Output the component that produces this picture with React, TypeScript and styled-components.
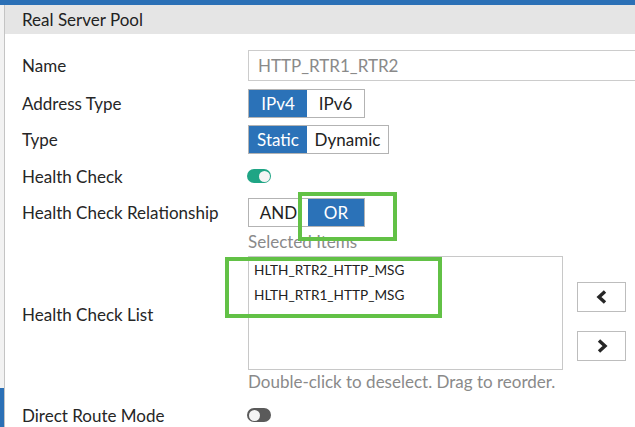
import * as React from 'react';
import styled, { createGlobalStyle } from 'styled-components';

const GlobalStyle = createGlobalStyle`
	html, body {
		margin: 0;
		padding: 0;
		width: 635px;
		height: 427px;
		overflow: hidden;
		background: #ffffff;
		font-family: Lato, "Open Sans", sans-serif;
	}
`;

const Page = styled.div`
	position: relative;
	width: 635px;
	height: 427px;
	display: flex;
	flex-direction: column;
	overflow: hidden;
`;

const TopBar = styled.div`
	height: 5px;
	background-color: #2b70b6;
	flex: none;
`;

const Body = styled.div`
	flex: 1;
	display: flex;
	min-height: 0;
`;

const SideStrip = styled.div`
	width: 4px;
	flex: none;
	background-color: #f2f2f2;
	display: flex;
	flex-direction: column;
	justify-content: flex-end;
`;

const SideAccent = styled.div`
	height: 39px;
	background-color: #2b70b6;
`;

const Panel = styled.div`
	flex: 1;
	border-left: 1px solid #c4c4c4;
	display: flex;
	flex-direction: column;
	min-width: 0;
`;

const Header = styled.div`
	flex: none;
	height: 29px;
	background-color: #e5e5e5;
	padding-left: 17px;
	display: flex;
	align-items: center;
	font-size: 17px;
	color: #222;
`;

const Form = styled.div`
	flex: none;
	padding: 16px 0 0 17px;
	display: grid;
	grid-template-columns: 226px 1fr;
`;

const Label = styled.div<{ $h: number; $mt?: number }>`
	height: ${p => p.$h}px;
	margin-top: ${p => p.$mt || 0}px;
	display: flex;
	align-items: center;
	font-size: 17px;
	color: #262626;
	white-space: nowrap;
`;

const Cell = styled.div<{ $h: number; $mt?: number }>`
	height: ${p => p.$h}px;
	margin-top: ${p => p.$mt || 0}px;
	display: flex;
	align-items: center;
`;

const TextInput = styled.div`
	box-sizing: border-box;
	width: 400px;
	height: 31px;
	border: 1px solid #cccccc;
	padding-left: 9px;
	display: flex;
	align-items: center;
	font-size: 17px;
	color: #8a8a8a;
`;

const Segmented = styled.div`
	display: flex;
	height: 29px;
	box-sizing: border-box;
	border: 1px solid #b3b3b3;
`;

const Segment = styled.div<{ $active?: boolean; $w: number }>`
	width: ${p => p.$w}px;
	box-sizing: border-box;
	display: flex;
	align-items: center;
	justify-content: center;
	font-size: 17px;
	background-color: ${p => (p.$active ? '#2b72b8' : '#ffffff')};
	color: ${p => (p.$active ? '#ffffff' : '#222')};
`;

const Toggle = styled.div<{ $on?: boolean }>`
	position: relative;
	width: 24px;
	height: 14px;
	border-radius: 8px;
	margin-left: -1px;
	background-color: ${p => (p.$on ? '#1fa585' : '#5a5a5a')};

	&::after {
		content: '';
		position: absolute;
		top: 1.5px;
		left: ${p => (p.$on ? '11.5px' : '1.5px')};
		width: 11px;
		height: 11px;
		border-radius: 50%;
		background-color: #f4f4f4;
	}
`;

const ListLabel = styled.div`
	display: flex;
	align-items: center;
	padding-top: 10px;
	font-size: 17px;
	color: #262626;
`;

const ListSection = styled.div`
	margin-top: 5px;
	display: flex;
	flex-direction: column;
`;

const HintText = styled.div<{ $mt: number }>`
	height: 20px;
	line-height: 20px;
	margin-top: ${p => p.$mt}px;
	font-size: 17px;
	color: #8a8a8a;
	white-space: nowrap;
`;

const ListRow = styled.div`
	display: flex;
	margin-top: 4px;
`;

const ListBox = styled.div`
	box-sizing: border-box;
	width: 315px;
	height: 114px;
	border: 1px solid #c8c8c8;
	padding: 3px 0 0 5px;
	display: flex;
	flex-direction: column;
`;

const ListItem = styled.div`
	height: 25px;
	line-height: 20px;
	font-size: 13.6px;
	color: #222;
`;

const ArrowColumn = styled.div`
	margin-left: 14px;
	padding-top: 26px;
	display: flex;
	flex-direction: column;
	gap: 19px;
`;

const ArrowButton = styled.div`
	box-sizing: border-box;
	width: 49px;
	height: 30px;
	border: 1px solid #bdbdbd;
	display: flex;
	align-items: center;
	justify-content: center;
`;

const Highlight = styled.div<{ $x: number; $y: number; $w: number; $h: number }>`
	position: absolute;
	left: ${p => p.$x}px;
	top: ${p => p.$y}px;
	width: ${p => p.$w}px;
	height: ${p => p.$h}px;
	box-sizing: border-box;
	border: 4px solid #62c146;
	pointer-events: none;
`;

const Chevron = ({ dir }: { dir: 'left' | 'right' }) => (
	<svg width="14" height="16" viewBox="0 0 14 16">
		<path
			d={dir === 'left' ? 'M10 2.5 L4 8 L10 13.5' : 'M4 2.5 L10 8 L4 13.5'}
			fill="none"
			stroke="#262626"
			strokeWidth="3.4"
		/>
	</svg>
);

export default function App() {
	return (
		<Page>
			<GlobalStyle />
			<TopBar />
			<Body>
				<SideStrip>
					<SideAccent />
				</SideStrip>
				<Panel>
					<Header>Real Server Pool</Header>
					<Form>
						<Label $h={31}>Name</Label>
						<Cell $h={31}>
							<TextInput>HTTP_RTR1_RTR2</TextInput>
						</Cell>

						<Label $h={29} $mt={8}>Address Type</Label>
						<Cell $h={29} $mt={8}>
							<Segmented>
								<Segment $active $w={58}>IPv4</Segment>
								<Segment $w={57}>IPv6</Segment>
							</Segmented>
						</Cell>

						<Label $h={29} $mt={7}>Type</Label>
						<Cell $h={29} $mt={7}>
							<Segmented>
								<Segment $active $w={58}>Static</Segment>
								<Segment $w={81}>Dynamic</Segment>
							</Segmented>
						</Cell>

						<Label $h={30} $mt={7}>Health Check</Label>
						<Cell $h={30} $mt={7}>
							<Toggle $on />
						</Cell>

						<Label $h={29} $mt={7}>Health Check Relationship</Label>
						<Cell $h={29} $mt={7}>
							<Segmented>
								<Segment $w={59}>AND</Segment>
								<Segment $active $w={56}>OR</Segment>
							</Segmented>
						</Cell>

						<ListLabel>Health Check List</ListLabel>
						<ListSection>
							<HintText $mt={0}>Selected Items</HintText>
							<ListRow>
								<ListBox>
									<ListItem>HLTH_RTR2_HTTP_MSG</ListItem>
									<ListItem>HLTH_RTR1_HTTP_MSG</ListItem>
								</ListBox>
								<ArrowColumn>
									<ArrowButton>
										<Chevron dir="left" />
									</ArrowButton>
									<ArrowButton>
										<Chevron dir="right" />
									</ArrowButton>
								</ArrowColumn>
							</ListRow>
							<HintText $mt={2}>Double-click to deselect. Drag to reorder.</HintText>
						</ListSection>

						<Label $h={30} $mt={8}>Direct Route Mode</Label>
						<Cell $h={30} $mt={8}>
							<Toggle />
						</Cell>
					</Form>
				</Panel>
			</Body>
			<Highlight $x={298} $y={192} $w={99} $h={49} />
			<Highlight $x={225} $y={257} $w={217} $h={61} />
		</Page>
	);
}
